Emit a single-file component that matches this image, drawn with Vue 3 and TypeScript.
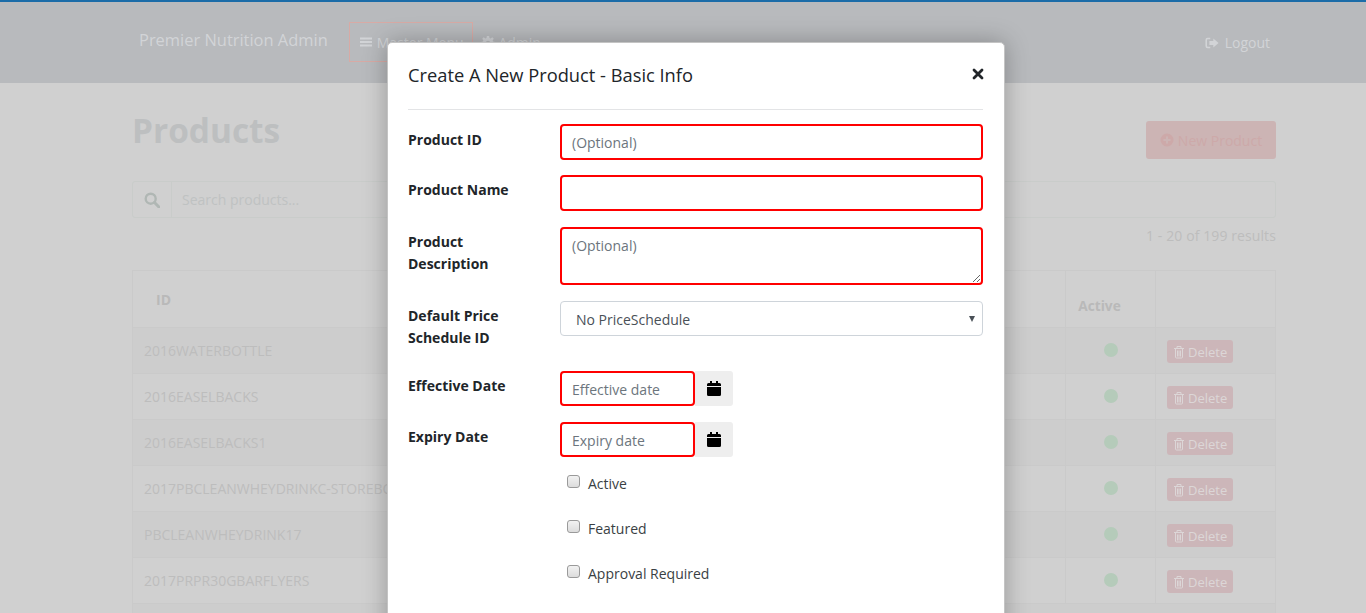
<script setup lang="ts">
const rows: string[] = [
  '2016WATERBOTTLE',
  '2016EASELBACKS',
  '2016EASELBACKS1',
  '2017PBCLEANWHEYDRINKC-STOREBOX',
  'PBCLEANWHEYDRINK17',
  '2017PRPR30GBARFLYERS'
]
const checks: string[] = ['Active', 'Featured', 'Approval Required']
</script>

<template>
  <div class="root">
    <div class="topline"></div>
    <header class="navbar">
      <span class="brand">Premier Nutrition Admin</span>
      <span class="nav-btn">
        <svg class="ico" viewBox="0 0 14 14"><path d="M1 2.500h12v2H1zM1 6h12v2H1zM1 9.500h12v2H1z" fill="currentColor" /></svg>
        Master Menu
      </span>
      <span class="nav-item">
        <svg class="ico" viewBox="0 0 16 16"><path fill="currentColor" fill-rule="evenodd" d="M6.700 0h2.600l.4 2.200 1.300.6L12.900 1.500l1.700 1.700-1.300 1.900.5 1.300 2.200.4v2.500l-2.200.4-.5 1.300 1.300 1.900-1.700 1.700-1.900-1.300-1.300.5-.4 2.200H6.700l-.4-2.200-1.300-.5-1.900 1.300-1.700-1.700 1.300-1.900-.5-1.300L0 9.300V6.800l2.200-.4.500-1.300-1.300-1.900 1.700-1.700L5 2.800l1.300-.6zM8 5.500a2.500 2.500 0 1 0 0 5 2.500 2.500 0 0 0 0-5z" /></svg>
        Admin
      </span>
      <span class="nav-item logout">
        <svg class="ico logout-ico" viewBox="0 0 16 14"><path fill="currentColor" d="M6 1H3a2.500 2.500 0 0 0-2.500 2.500v7A2.500 2.500 0 0 0 3 13h3v-1.800H3.200a.9.9 0 0 1-.9-.9V3.700a.9.900 0 0 1 .9-.9H6zM9.500 1.800 15.500 7l-6 5.200V9.300H5V4.700h4.500z" /></svg>
        Logout
      </span>
    </header>

    <main class="page">
      <div class="title-row">
        <h1>Products</h1>
        <span class="new-btn">
          <svg class="ico" viewBox="0 0 14 14"><path fill="currentColor" d="M7 .5a6.500 6.500 0 1 0 0 13 6.500 6.500 0 0 0 0-13zm3.500 7.500H8v2.500H6V8H3.500V6H6V3.500h2V6h2.500z" /></svg>
          New Product
        </span>
      </div>
      <div class="search">
        <span class="search-ico">
          <svg viewBox="0 0 16 16" width="16" height="16"><circle cx="6.700" cy="6.700" r="5" fill="none" stroke="currentColor" stroke-width="2.400" /><path d="M10.500 10.500 15 15" stroke="currentColor" stroke-width="3" stroke-linecap="round" /></svg>
        </span>
        <span class="search-text">Search products...</span>
      </div>
      <div class="results">1 - 20 of 199 results</div>

      <div class="table">
        <div class="tr head">
          <div class="td id-col id-head">ID</div>
          <div class="td fill"></div>
          <div class="td active-col active-head">Active</div>
          <div class="td del-col"></div>
        </div>
        <div v-for="(r, i) in rows" :key="r" class="tr" :class="{ odd: i % 2 === 0 }">
          <div class="td id-col">{{ r }}</div>
          <div class="td fill"></div>
          <div class="td active-col"><span class="dot"></span></div>
          <div class="td del-col">
            <span class="del">
              <svg class="ico trash" viewBox="0 0 12 14"><path fill="none" stroke="currentColor" stroke-width="1" d="M1 3.500h10M2.500 3.500v8.500a1 1 0 0 0 1 1h5a1 1 0 0 0 1-1V3.500M4 3.500V1.500h4v2M4.500 5.500v6M6 5.500v6M7.500 5.500v6" /></svg>
              Delete
            </span>
          </div>
        </div>
        <div class="tr odd"></div>
      </div>
    </main>

    <section class="modal">
      <div class="modal-head">
        <h2>Create A New Product - Basic Info</h2>
        <svg class="close" viewBox="0 0 12 12" width="12" height="12"><path d="M2 2l8 8M10 2l-8 8" stroke="#212529" stroke-width="2.800" stroke-linecap="round" /></svg>
      </div>
      <div class="form">
        <div class="row">
          <label class="nudge">Product ID</label>
          <input class="ctl bad" placeholder="(Optional)" />
        </div>
        <div class="row wide-gap">
          <label>Product Name</label>
          <input class="ctl bad" />
        </div>
        <div class="row wide-gap">
          <label>Product<br />Description</label>
          <textarea class="ctl bad area" placeholder="(Optional)"></textarea>
        </div>
        <div class="row tall">
          <label>Default Price<br />Schedule ID</label>
          <div class="ctl select">
            <span>No PriceSchedule</span>
            <span class="caret"></span>
          </div>
        </div>
        <div class="row wide-gap">
          <label>Effective Date</label>
          <div class="date">
            <input class="ctl bad" placeholder="Effective date" />
            <span class="cal">
              <svg viewBox="0 0 14 15" width="14" height="15"><path fill="#000" d="M3 0h2v2h4V0h2v2h1.500A1.500 1.500 0 0 1 14 3.500V5H0V3.500A1.500 1.500 0 0 1 1.500 2H3zM0 6h14v7.500a1.500 1.500 0 0 1-1.500 1.500h-11A1.500 1.500 0 0 1 0 13.500z" /></svg>
            </span>
          </div>
        </div>
        <div class="row last">
          <label>Expiry Date</label>
          <div class="date">
            <input class="ctl bad" placeholder="Expiry date" />
            <span class="cal">
              <svg viewBox="0 0 14 15" width="14" height="15"><path fill="#000" d="M3 0h2v2h4V0h2v2h1.500A1.500 1.500 0 0 1 14 3.500V5H0V3.500A1.500 1.500 0 0 1 1.500 2H3zM0 6h14v7.500a1.500 1.500 0 0 1-1.500 1.500h-11A1.500 1.500 0 0 1 0 13.500z" /></svg>
            </span>
          </div>
        </div>
        <div class="checks">
          <div v-for="c in checks" :key="c" class="check">
            <span class="box"></span>
            <span>{{ c }}</span>
          </div>
        </div>
      </div>
    </section>
  </div>
</template>

<style>
html, body { margin: 0; height: 613px; overflow: hidden; }
</style>

<style scoped>
.root {
  position: relative;
  height: 613px;
  overflow: hidden;
  background: #d0d0d0;
  font-family: "Open Sans", "Noto Sans", sans-serif;
  font-size: 14px;
  color: #212529;
}
.topline { height: 2px; background: #1b6ca8; }
.navbar {
  height: 81px;
  box-sizing: border-box;
  background: #b8babd;
  display: flex;
  align-items: center;
  padding: 0 96px 0 139px;
  color: #d2d4d7;
}
.brand { font-size: 16.450px; margin-right: 21px; margin-top: -7px; }
.ico { width: 14px; height: 14px; vertical-align: -2px; }
.logout-ico { width: 14px; margin-right: 2px; }
.nav-btn {
  box-sizing: border-box;
  width: 124px;
  height: 40px;
  border: 1px solid #d8aaa5;
  display: flex;
  align-items: center;
  gap: 4px;
  padding-left: 9px;
  margin-top: -1px;
}
.nav-item { margin-left: 8px; }
.logout { margin-left: auto; }
.page { width: 1144px; margin-left: 132px; }
.title-row {
  display: flex;
  justify-content: space-between;
  align-items: center;
  height: 76px;
  padding-top: 38px;
  box-sizing: border-box;
}
h1 { margin: -20px 0 0 0; font-size: 33.400px; font-weight: 700; color: #bdbfc0; }
.new-btn {
  box-sizing: border-box;
  width: 130px;
  height: 38px;
  background: #ccb4b4;
  border-radius: 3px;
  color: #cda9a9;
  display: flex;
  align-items: center;
  justify-content: center;
  gap: 4px;
}
.search {
  box-sizing: border-box;
  height: 37px;
  margin-top: 22px;
  border: 1px solid #c9ccca;
  border-radius: 3px;
  display: flex;
  align-items: center;
  color: #bfc2c2;
}
.search-ico {
  width: 38px;
  height: 100%;
  display: flex;
  align-items: center;
  justify-content: center;
  border-right: 1px solid #c9ccca;
  color: #b0b7b4;
}
.search-text { margin-left: 10px; }
.results { margin-top: 8px; text-align: right; color: #bdbdbd; line-height: 20px; letter-spacing: 0.1px; }
.table { margin-top: 24px; border: 1px solid #cacaca; }
.tr { display: flex; height: 46px; border-top: 1px solid #cacaca; box-sizing: border-box; }
.tr.head { height: 56px; border-top: 0; }
.tr.odd { background: #cdcdcd; }
.td { box-sizing: border-box; display: flex; align-items: center; }
.id-col { width: 400px; padding-left: 11px; color: #bdbdbd; white-space: nowrap; }
.id-head { padding-left: 23px; font-weight: 700; color: #b9b9b9; }
.fill { flex: 1; }
.active-col {
  width: 90px;
  border-left: 1px solid #cacaca;
  justify-content: center;
}
.active-head { font-weight: 700; font-size: 13.700px; color: #b9b9b9; padding: 13px 22px 0 0; }
.dot {
  width: 14px;
  height: 14px;
  border-radius: 50%;
  background: #b5cbba;
  margin-top: -2px;
}
.del-col { width: 120px; border-left: 1px solid #cacaca; padding-left: 11px; }
.del {
  display: flex;
  align-items: center;
  gap: 3px;
  box-sizing: border-box;
  width: 66px;
  height: 23px;
  margin-top: 2px;
  padding-left: 6px;
  background: #ccb6b9;
  border-radius: 3px;
  color: #dcd6d7;
  font-size: 13px;
}
.trash { width: 12px; height: 14px; }
.modal {
  position: absolute;
  left: 387px;
  top: 42px;
  width: 618px;
  height: 640px;
  box-sizing: border-box;
  background: #fff;
  border: 1px solid #c4c4c4;
  border-radius: 5px;
  padding: 0 21px 0 20px;
  box-shadow: 0 0 24px rgba(0, 0, 0, 0.28);
}
.modal-head {
  height: 67px;
  border-bottom: 1px solid #e3e4e6;
  display: flex;
  align-items: center;
  justify-content: space-between;
  padding-bottom: 4px;
  box-sizing: border-box;
}
.close { margin-right: -1px; }
h2 { margin: 0; font-size: 18.300px; font-weight: 500; color: #212529; }
.form { padding-top: 14px; }
.row { display: flex; margin-bottom: 15px; }
.row.wide-gap { margin-bottom: 16px; }
.row.tall { margin-bottom: 22px; }
.row.last { margin-bottom: 4px; }
label {
  width: 152px;
  flex: none;
  font-weight: 700;
  font-size: 14px;
  line-height: 22px;
  padding-top: 4px;
  color: #212529;
}
label.nudge { padding-top: 5px; }
.ctl {
  box-sizing: border-box;
  width: 423px;
  height: 36px;
  border: 1px solid #ced4da;
  border-radius: 4px;
  padding: 0 10px;
  font: inherit;
  color: #495057;
  outline: none;
  display: block;
}
.ctl::placeholder { color: #6c757d; opacity: 1; }
.bad { border: 2px solid #f00; }
.area { height: 58px; padding-top: 7px; resize: vertical; }
.select {
  display: flex;
  align-items: center;
  justify-content: space-between;
  height: 35px;
  padding: 1px 7px 0 15px;
}
.caret {
  width: 0;
  height: 0;
  border-left: 3px solid transparent;
  border-right: 3px solid transparent;
  border-top: 6px solid #495057;
}
.date { display: flex; }
.date .ctl { width: 135px; height: 35px; padding-top: 2px; }
.cal {
  width: 38px;
  height: 35px;
  background: #eeeeee;
  border-radius: 0 3px 3px 0;
  display: flex;
  align-items: center;
  justify-content: center;
}
.checks { padding-left: 159px; }
.check {
  display: flex;
  align-items: center;
  height: 45px;
  color: #3a3f44;
}
.box {
  box-sizing: border-box;
  width: 13px;
  height: 13px;
  border: 1px solid #9a9a9a;
  border-radius: 3px;
  background: linear-gradient(#f2f2f2, #dcdcdc);
  margin-right: 8px;
  margin-top: -4px;
}
</style>
